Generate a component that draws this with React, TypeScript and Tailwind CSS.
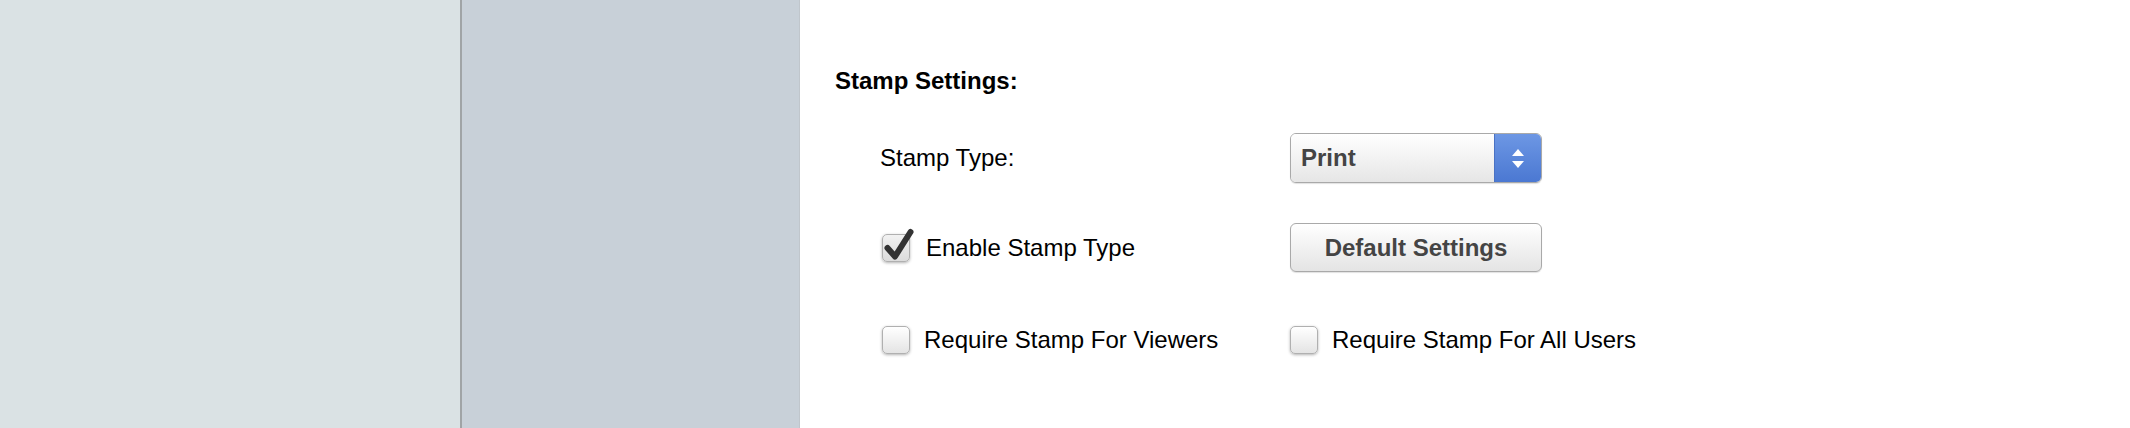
import React from "react";

const FONT = { fontFamily: '"Liberation Sans", Arial, Helvetica, sans-serif' };

const BOX_CLASS =
  "relative h-[28px] w-[28px] shrink-0 rounded-[5px] border border-[#b0b0b0] shadow-[0_1px_3px_rgba(0,0,0,0.3)]";

function Checkbox({ checked }: { checked?: boolean }) {
  return (
    <div
      className={
        BOX_CLASS +
        (checked
          ? " bg-gradient-to-b from-[#f2f2f2] to-[#dcdcdc]"
          : " bg-gradient-to-b from-white to-[#e4e4e4]")
      }
    >
      {checked && (
        <svg
          className="absolute left-[-2px] top-[-9px]"
          width="36"
          height="40"
          viewBox="0 0 36 40"
        >
          <path
            d="M6.5 22 L14 30.5 L29.5 6"
            fill="none"
            stroke="#333"
            strokeWidth="6"
            strokeLinecap="round"
            strokeLinejoin="round"
          />
        </svg>
      )}
    </div>
  );
}

function CheckRow({ label, checked }: { label: string; checked?: boolean }) {
  return (
    <label
      className={
        "flex items-center pl-[2px] text-[24px] leading-[28px] text-black " +
        (checked ? "gap-[16px]" : "gap-[14px]")
      }
    >
      <Checkbox checked={checked} />
      <span>{label}</span>
    </label>
  );
}

function SelectBox() {
  return (
    <div className="flex h-[50px] w-[252px] overflow-hidden rounded-[6px] border border-[#a9a9a9] shadow-[0_1px_1px_rgba(0,0,0,0.12)]">
      <div className="flex flex-1 items-center bg-gradient-to-b from-white to-[#e6e6e6] pl-[10px] text-[24px] font-bold text-[#444]">
        Print
      </div>
      <div className="flex w-[47px] flex-col items-center justify-center gap-[5px] border-l border-[#4a72c4] bg-gradient-to-b from-[#6d97e4] to-[#4b78d2]">
        <svg width="12" height="7" viewBox="0 0 12 7">
          <path d="M6 0 L12 7 L0 7 Z" fill="#fff" />
        </svg>
        <svg width="12" height="7" viewBox="0 0 12 7">
          <path d="M0 0 L12 0 L6 7 Z" fill="#fff" />
        </svg>
      </div>
    </div>
  );
}

export default function App() {
  return (
    <div className="flex h-[428px] w-full" style={FONT}>
      <div className="w-[460px] shrink-0 bg-[#dae2e4]" />
      <div className="w-[2px] shrink-0 bg-[#a0a4a6]" />
      <div className="w-[338px] shrink-0 border-r border-[#c0c6cc] bg-[#c8d0d8]" />

      <div className="flex-1 bg-white pl-[35px] pt-[67px]">
        <h2 className="text-[24px] font-bold leading-[28px] text-black">
          Stamp Settings:
        </h2>

        <div className="ml-[45px] mt-[38px] grid grid-cols-[410px_auto] items-center">
          <div className="text-[24px] leading-[28px] text-black">Stamp Type:</div>
          <SelectBox />

          <div className="mt-[40px]">
            <CheckRow label="Enable Stamp Type" checked />
          </div>
          <button className="mt-[40px] h-[49px] w-[252px] rounded-[6px] border border-[#a9a9a9] bg-gradient-to-b from-white to-[#e4e4e4] text-[24px] font-bold text-[#444] shadow-[0_1px_1px_rgba(0,0,0,0.12)]">
            Default Settings
          </button>

          <div className="mt-[54px]">
            <CheckRow label="Require Stamp For Viewers" />
          </div>
          <div className="mt-[54px] -ml-[2px]">
            <CheckRow label="Require Stamp For All Users" />
          </div>
        </div>
      </div>
    </div>
  );
}
